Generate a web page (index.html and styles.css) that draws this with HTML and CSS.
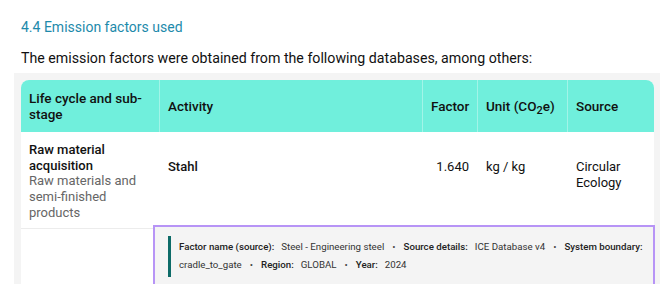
FILE: index.html
```html
<!DOCTYPE html>
<html lang="en">
<head>
<meta charset="utf-8">
<title>Emission factors</title>
<link rel="stylesheet" href="styles.css">
</head>
<body>
<div class="page">
  <h3 class="section-title">4.4 Emission factors used</h3>
  <p class="intro">The emission factors were obtained from the following databases, among others:</p>
  <div class="table-wrap">
    <table class="ef-table">
      <colgroup>
        <col class="c-stage">
        <col class="c-activity">
        <col class="c-factor">
        <col class="c-unit">
        <col class="c-source">
      </colgroup>
      <thead>
        <tr>
          <th>Life cycle and sub-stage</th>
          <th>Activity</th>
          <th class="num">Factor</th>
          <th>Unit (CO<sub>2</sub>e)</th>
          <th class="last">Source</th>
        </tr>
      </thead>
      <tbody>
        <tr class="main-row">
          <td class="stage">
            <div class="stage-name">Raw material acquisition</div>
            <div class="stage-sub">Raw materials and semi-finished products</div>
          </td>
          <td class="activity">Stahl</td>
          <td class="num value">1.640</td>
          <td class="value">kg / kg</td>
          <td class="value">Circular Ecology</td>
        </tr>
        <tr class="detail-row">
          <td></td>
          <td colspan="4" class="detail-cell">
            <div class="detail-box">
              <div class="detail-inner">
                <span class="lbl">Factor name (source):</span><span class="val">Steel - Engineering steel</span><span class="dot">•</span>
                <span class="lbl">Source details:</span><span class="val">ICE Database v4</span><span class="dot">•</span>
                <span class="lbl">System boundary:</span><span class="val">cradle_to_gate</span><span class="dot">•</span>
                <span class="lbl">Region:</span><span class="val">GLOBAL</span><span class="dot">•</span>
                <span class="lbl">Year:</span><span class="val">2024</span>
              </div>
            </div>
          </td>
        </tr>
      </tbody>
    </table>
  </div>
</div>
</body>
</html>
```

FILE: styles.css
```css
* { box-sizing: border-box; }
html, body { margin: 0; padding: 0; background: #fff; }
body {
  font-family: Roboto, "Liberation Sans", Arial, sans-serif;
  color: #111;
}
.page {
  padding: 17px 10px 0 14px;
}
.section-title {
  margin: 0 0 0 7px;
  font-size: 14px;
  line-height: 20px;
  font-weight: 400;
  color: #1d8aab;
}
.intro {
  margin: 11px 0 0 7px;
  font-size: 14.2px;
  line-height: 20px;
  color: #111;
}
.table-wrap {
  margin-top: 5px;
  background: #f4f4f4;
  padding: 7px 6px 0 7px;
  width: 646px;
}
.ef-table {
  width: 633px;
  border-collapse: separate;
  border-spacing: 0;
  table-layout: fixed;
  background: #fff;
  border-radius: 8px 8px 0 0;
  font-size: 13px;
}
.c-stage { width: 138px; }
.c-activity { width: 263px; }
.c-factor { width: 55px; }
.c-unit { width: 90px; }
.c-source { width: 87px; }

.ef-table th {
  background: #70efdc;
  font-weight: 500;
  font-size: 13.5px;
  line-height: 16px;
  text-align: left;
  vertical-align: middle;
  height: 52px;
  padding: 0 8px;
  border-left: 1px solid rgba(255,255,255,0.35);
  color: #111;
}
.ef-table th:first-child { border-left: none; border-top-left-radius: 8px; }
.ef-table th.last { border-top-right-radius: 8px; }
.ef-table th.num { text-align: right; }
.ef-table th sub { font-size: 11px; vertical-align: -3px; line-height: 0; }

.main-row td {
  border-bottom: 1px solid #ececec;
  vertical-align: top;
  padding: 10px 8px 7px 8px;
  line-height: 15.7px;
}
.main-row td.activity,
.main-row td.value { padding-top: 27px; padding-left: 9px; }
.main-row td.activity { font-weight: 500; }
.main-row td.num { text-align: right; padding-right: 8px; }
.stage-name { font-weight: 500; color: #111; }
.stage-sub { color: #666; }

.detail-row td { padding: 0; vertical-align: top; }
.detail-cell { padding: 0 0 26px 0; }
.detail-box {
  margin: -2px 1px 0 -4px;
  background: #f4f4f4;
  outline: 2px solid #b794f6;
  padding: 9px 2px 7px 13px;
}
.detail-inner {
  border-left: 3px solid #0d6b68;
  padding: 2px 0 3px 8px;
  display: flex;
  flex-wrap: wrap;
  align-items: baseline;
  font-size: 9.7px;
  line-height: 18px;
  color: #333;
}
.lbl { font-weight: 500; color: #222; margin-right: 7px; }
.val { color: #333; margin-right: 8px; }
.dot { color: #444; margin-right: 8px; }
```
